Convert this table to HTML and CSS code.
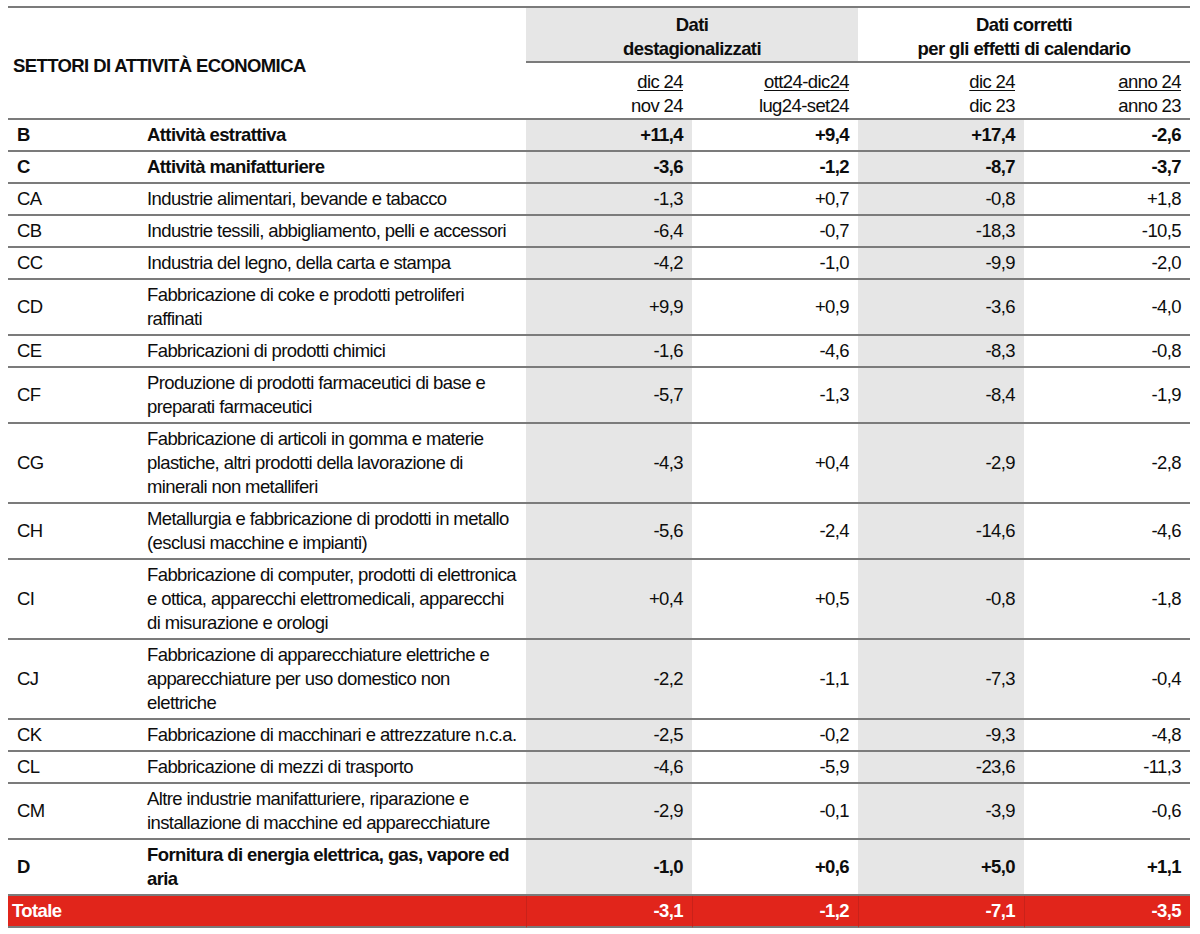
FILE: index.html
```html
<!DOCTYPE html>
<html lang="it">
<head>
<meta charset="utf-8">
<title>Settori di attività economica</title>
<link rel="stylesheet" href="styles.css">
</head>
<body>
<table class="tbl">
  <colgroup>
    <col class="c-code"><col class="c-desc"><col class="c-val"><col class="c-val"><col class="c-val"><col class="c-val">
  </colgroup>
  <thead>
    <tr class="h1">
      <th class="title" rowspan="2" colspan="2">SETTORI DI ATTIVITÀ ECONOMICA</th>
      <th class="grp shade" colspan="2">Dati<br>destagionalizzati</th>
      <th class="grp" colspan="2">Dati corretti<br>per gli effetti di calendario</th>
    </tr>
    <tr class="h2">
      <th class="per"><span class="u">dic 24</span><br>nov 24</th>
      <th class="per"><span class="u">ott24-dic24</span><br>lug24-set24</th>
      <th class="per"><span class="u">dic 24</span><br>dic 23</th>
      <th class="per"><span class="u">anno 24</span><br>anno 23</th>
    </tr>
  </thead>
  <tbody>
    <tr class="bold"><td class="code">B</td><td class="desc">Attività estrattiva</td><td class="v shade">+11,4</td><td class="v">+9,4</td><td class="v shade">+17,4</td><td class="v">-2,6</td></tr>
    <tr class="bold"><td class="code">C</td><td class="desc">Attività manifatturiere</td><td class="v shade">-3,6</td><td class="v">-1,2</td><td class="v shade">-8,7</td><td class="v">-3,7</td></tr>
    <tr><td class="code">CA</td><td class="desc">Industrie alimentari, bevande e tabacco</td><td class="v shade">-1,3</td><td class="v">+0,7</td><td class="v shade">-0,8</td><td class="v">+1,8</td></tr>
    <tr><td class="code">CB</td><td class="desc">Industrie tessili, abbigliamento, pelli e accessori</td><td class="v shade">-6,4</td><td class="v">-0,7</td><td class="v shade">-18,3</td><td class="v">-10,5</td></tr>
    <tr><td class="code">CC</td><td class="desc">Industria del legno, della carta e stampa</td><td class="v shade">-4,2</td><td class="v">-1,0</td><td class="v shade">-9,9</td><td class="v">-2,0</td></tr>
    <tr><td class="code">CD</td><td class="desc">Fabbricazione di coke e prodotti petroliferi<br>raffinati</td><td class="v shade">+9,9</td><td class="v">+0,9</td><td class="v shade">-3,6</td><td class="v">-4,0</td></tr>
    <tr><td class="code">CE</td><td class="desc">Fabbricazioni di prodotti chimici</td><td class="v shade">-1,6</td><td class="v">-4,6</td><td class="v shade">-8,3</td><td class="v">-0,8</td></tr>
    <tr><td class="code">CF</td><td class="desc">Produzione di prodotti farmaceutici di base e<br>preparati farmaceutici</td><td class="v shade">-5,7</td><td class="v">-1,3</td><td class="v shade">-8,4</td><td class="v">-1,9</td></tr>
    <tr><td class="code">CG</td><td class="desc">Fabbricazione di articoli in gomma e materie<br>plastiche, altri prodotti della lavorazione di<br>minerali non metalliferi</td><td class="v shade">-4,3</td><td class="v">+0,4</td><td class="v shade">-2,9</td><td class="v">-2,8</td></tr>
    <tr><td class="code">CH</td><td class="desc">Metallurgia e fabbricazione di prodotti in metallo<br>(esclusi macchine e impianti)</td><td class="v shade">-5,6</td><td class="v">-2,4</td><td class="v shade">-14,6</td><td class="v">-4,6</td></tr>
    <tr><td class="code">CI</td><td class="desc">Fabbricazione di computer, prodotti di elettronica<br>e ottica, apparecchi elettromedicali, apparecchi<br>di misurazione e orologi</td><td class="v shade">+0,4</td><td class="v">+0,5</td><td class="v shade">-0,8</td><td class="v">-1,8</td></tr>
    <tr><td class="code">CJ</td><td class="desc">Fabbricazione di apparecchiature elettriche e<br>apparecchiature per uso domestico non<br>elettriche</td><td class="v shade">-2,2</td><td class="v">-1,1</td><td class="v shade">-7,3</td><td class="v">-0,4</td></tr>
    <tr><td class="code">CK</td><td class="desc">Fabbricazione di macchinari e attrezzature n.c.a.</td><td class="v shade">-2,5</td><td class="v">-0,2</td><td class="v shade">-9,3</td><td class="v">-4,8</td></tr>
    <tr><td class="code">CL</td><td class="desc">Fabbricazione di mezzi di trasporto</td><td class="v shade">-4,6</td><td class="v">-5,9</td><td class="v shade">-23,6</td><td class="v">-11,3</td></tr>
    <tr><td class="code">CM</td><td class="desc">Altre industrie manifatturiere, riparazione e<br>installazione di macchine ed apparecchiature</td><td class="v shade">-2,9</td><td class="v">-0,1</td><td class="v shade">-3,9</td><td class="v">-0,6</td></tr>
    <tr class="bold"><td class="code">D</td><td class="desc">Fornitura di energia elettrica, gas, vapore ed<br>aria</td><td class="v shade">-1,0</td><td class="v">+0,6</td><td class="v shade">+5,0</td><td class="v">+1,1</td></tr>
    <tr class="total"><td class="tot-label" colspan="2">Totale</td><td class="v">-3,1</td><td class="v">-1,2</td><td class="v">-7,1</td><td class="v">-3,5</td></tr>
  </tbody>
</table>
</body>
</html>
```

FILE: styles.css
```css
html, body {
  margin: 0;
  padding: 0;
  background: #ffffff;
}

body {
  padding: 6px 0 0 8px;
  font-family: "Liberation Sans", Arial, sans-serif;
  font-size: 18.5px;
  letter-spacing: -0.6px;
  color: #0d0d0d;
}

.tbl {
  border-collapse: separate;
  border-spacing: 0;
  table-layout: fixed;
  width: 1182px;
  border-top: 2px solid #7b7b7b;
}

.c-code { width: 137px; }
.c-desc { width: 381px; }
.c-val { width: 166px; }

th, td {
  padding: 3px 0;
  line-height: 24px;
  border-bottom: 2px solid #7b7b7b;
  vertical-align: middle;
  font-weight: normal;
  white-space: nowrap;
  overflow: visible;
}

.shade {
  background: #e6e6e6;
}

.title {
  text-align: left;
  font-weight: bold;
  padding: 6px 0 0 5px;
}

.grp {
  font-weight: bold;
  text-align: center;
  padding: 5px 0 0;
  vertical-align: top;
}

.h2 th {
  padding: 7px 9px 0 0;
  text-align: right;
  vertical-align: top;
}

.u {
  text-decoration: underline;
  text-decoration-thickness: 1px;
  text-underline-offset: 2px;
}

.code {
  padding-left: 9px;
}

.desc {
  padding-left: 2px;
}

.v {
  text-align: right;
  padding-right: 9px;
}

.bold td {
  font-weight: bold;
}

.total td {
  background: #e1251b;
  color: #ffffff;
  font-weight: bold;
}

.total .v {
  border-left: 1px solid #c9221a;
}

.tot-label {
  padding-left: 4px;
}
```
